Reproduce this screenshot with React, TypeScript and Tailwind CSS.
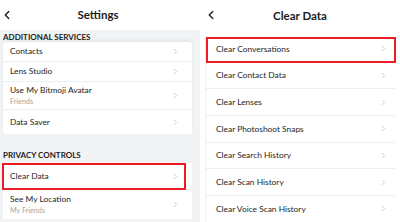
import { ChevronLeft, ChevronRight } from "lucide-react";

const font = { fontFamily: "Lato, 'Open Sans', sans-serif" };

type Row = { label: string; sub?: string; h: string };

const services: Row[] = [
  { label: "Contacts", h: "h-[20px]" },
  { label: "Lens Studio", h: "h-[20px]" },
  { label: "Use My Bitmoji Avatar", sub: "Friends", h: "h-[28px]" },
  { label: "Data Saver", h: "h-[24px]" },
];

const clearItems = [
  "Clear Conversations",
  "Clear Contact Data",
  "Clear Lenses",
  "Clear Photoshoot Snaps",
  "Clear Search History",
  "Clear Scan History",
  "Clear Voice Scan History",
];

const SettingsRow = ({ row, last }: { row: Row; last?: boolean }) => (
  <div
    className={`flex items-center justify-between pl-[7px] pr-[12px] ${row.h} ${
      last ? "" : "border-b border-[#eeeeef]"
    }`}
  >
    <div className="flex flex-col leading-none">
      <span className="text-[8.4px] text-[#262626]">{row.label}</span>
      {row.sub && <span className="mt-[3px] text-[7.2px] text-[#a3a3a3]">{row.sub}</span>}
    </div>
    <ChevronRight className="h-[9px] w-[9px] text-[#bdbdbd]" strokeWidth={2} />
  </div>
);

export default function App() {
  return (
    <div className="flex h-[222px] w-[400px] overflow-hidden bg-[#f2f3f5]" style={font}>
      {/* Left: Settings */}
      <div className="flex w-[200px] flex-col">
        <div className="relative flex h-[30px] shrink-0 items-center justify-center bg-white">
          <ChevronLeft className="absolute left-[0px] top-[8px] h-[14px] w-[14px] text-[#222]" strokeWidth={2.5} />
          <span className="ml-[-4px] text-[11.5px] font-bold text-[#1c1c1c]">Settings</span>
        </div>
        <div className="px-[3px] pt-[3px] text-[8px] font-bold leading-[9px] text-[#1c1c1c]">
          ADDITIONAL SERVICES
        </div>
        <div className="ml-[3px] w-[189px] shrink-0 rounded-[3px] bg-white shadow-[0_-2px_4px_rgba(0,0,0,0.06)]">
          {services.map((r, i) => (
            <SettingsRow key={r.label} row={r} last={i === services.length - 1} />
          ))}
        </div>
        <div className="px-[3px] pt-[17px] text-[8px] font-bold leading-[9px] text-[#1c1c1c]">
          PRIVACY CONTROLS
        </div>
        <div className="ml-[3px] mt-[3px] w-[189px] shrink-0 bg-white">
          <div className="relative flex h-[27px] items-center justify-between border-b border-[#eeeeef] pl-[7px] pr-[12px]">
            <span className="text-[8.4px] text-[#262626]">Clear Data</span>
            <ChevronRight className="h-[9px] w-[9px] text-[#bdbdbd]" strokeWidth={2} />
            <div className="pointer-events-none absolute -left-[1px] top-0 h-[27px] w-[184px] border-2 border-[#ec1c24]" />
          </div>
          <div className="flex h-[29px] items-center justify-between pl-[7px] pr-[12px]">
            <div className="flex flex-col leading-none">
              <span className="text-[8.4px] text-[#262626]">See My Location</span>
              <span className="mt-[3px] text-[7.2px] text-[#a3a3a3]">My Friends</span>
            </div>
            <ChevronRight className="h-[9px] w-[9px] text-[#bdbdbd]" strokeWidth={2} />
          </div>
        </div>
      </div>

      {/* Right: Clear Data */}
      <div className="flex w-[200px] flex-col bg-white">
        <div className="relative flex h-[31px] shrink-0 items-center justify-center">
          <ChevronLeft className="absolute left-[4px] top-[8px] h-[14px] w-[14px] text-[#222]" strokeWidth={2.5} />
          <span className="text-[11.5px] font-bold text-[#1c1c1c]">Clear Data</span>
        </div>
        <div className="ml-[5px] mr-[4px] mt-[5px] flex flex-col border-l border-[#f0f0f0]">
          {clearItems.map((label, i) => (
            <div
              key={label}
              className="relative flex h-[26.7px] shrink-0 items-center justify-between border-b border-[#efefef] pl-[10px] pr-[8px]"
            >
              <span className="text-[8.4px] text-[#262626]">{label}</span>
              <ChevronRight className="h-[9px] w-[9px] text-[#bdbdbd]" strokeWidth={2} />
              {i === 0 && (
                <div className="pointer-events-none absolute inset-x-0 top-[1px] h-[26px] border-2 border-[#ec1c24]" />
              )}
            </div>
          ))}
        </div>
      </div>
    </div>
  );
}
